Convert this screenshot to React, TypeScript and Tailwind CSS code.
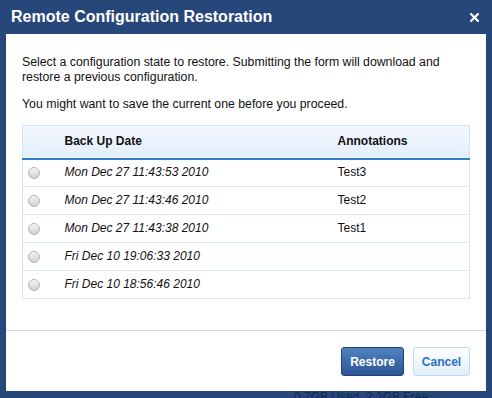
const backups = [
  { date: "Mon Dec 27 11:43:53 2010", note: "Test3" },
  { date: "Mon Dec 27 11:43:46 2010", note: "Test2" },
  { date: "Mon Dec 27 11:43:38 2010", note: "Test1" },
  { date: "Fri Dec 10 19:06:33 2010", note: "" },
  { date: "Fri Dec 10 18:56:46 2010", note: "" },
];

function Radio() {
  return (
    <span className="block h-[12px] w-[12px] rounded-full border border-[#b4b4b4] bg-gradient-to-b from-[#f4f4f4] to-[#d2d2d2]" />
  );
}

export default function App() {
  return (
    <div
      className="flex h-[398px] w-[492px] flex-col overflow-hidden bg-[#27477a]"
      style={{ fontFamily: '"Liberation Sans", Arial, sans-serif' }}
    >
      {/* Title bar */}
      <div className="flex h-[34px] shrink-0 items-center justify-between pl-[11px] pr-[13px]">
        <h1 className="text-[16px] font-bold leading-none text-white">Remote Configuration Restoration</h1>
        <svg width="9" height="9" viewBox="0 0 9 9" className="mt-[1px]">
          <path d="M1 1L8 8M8 1L1 8" stroke="white" strokeWidth="2.2" strokeLinecap="square" />
        </svg>
      </div>

      {/* Body */}
      <div className="mx-[6px] flex h-[357px] shrink-0 flex-col bg-white">
        <div className="px-[16px] pt-[21px] text-[12.3px] leading-[15px] text-[#111]">
          <p>
            Select a configuration state to restore. Submitting the form will download and restore a previous
            configuration.
          </p>
          <p className="mt-[12px]">You might want to save the current one before you proceed.</p>

          <table className="mt-[13px] w-[448px] border-collapse border border-[#d5e3f2] text-[12px] text-[#111]">
            <thead>
              <tr className="h-[33px] border-b-2 border-[#2f7bd0] bg-gradient-to-b from-[#f3f8fd] to-[#e3eefa]">
                <th className="w-[42px]" />
                <th className="pl-0 text-left font-bold">Back Up Date</th>
                <th className="w-[132px] text-left font-bold">Annotations</th>
              </tr>
            </thead>
            <tbody>
              {backups.map((b) => (
                <tr key={b.date} className="h-[28px] border-b border-[#dbe7f4]">
                  <td className="pl-[5px]">
                    <Radio />
                  </td>
                  <td className="italic">{b.date}</td>
                  <td>{b.note}</td>
                </tr>
              ))}
            </tbody>
          </table>
        </div>

        <div className="mt-auto border-t border-[#c9dbeb] pb-[15px] pt-[16px]">
          <div className="flex justify-end gap-[9px] pr-[16px]">
            <button className="h-[29px] w-[63px] rounded-[3px] border border-[#1e4480] bg-gradient-to-b from-[#5282c0] to-[#2b5595] text-[12px] font-bold text-white">
              Restore
            </button>
            <button className="h-[29px] w-[57px] rounded-[3px] border border-[#c2d8ee] bg-gradient-to-b from-[#ffffff] to-[#e2eefa] text-[12px] font-bold text-[#2b71c2]">
              Cancel
            </button>
          </div>
        </div>
      </div>

      {/* Page behind the dialog */}
      <div className="h-[7px] overflow-hidden pl-[294px] text-[12px] leading-[12px] text-[#132a52]">
        0.7GB Used, 2.2GB Free
      </div>
    </div>
  );
}
